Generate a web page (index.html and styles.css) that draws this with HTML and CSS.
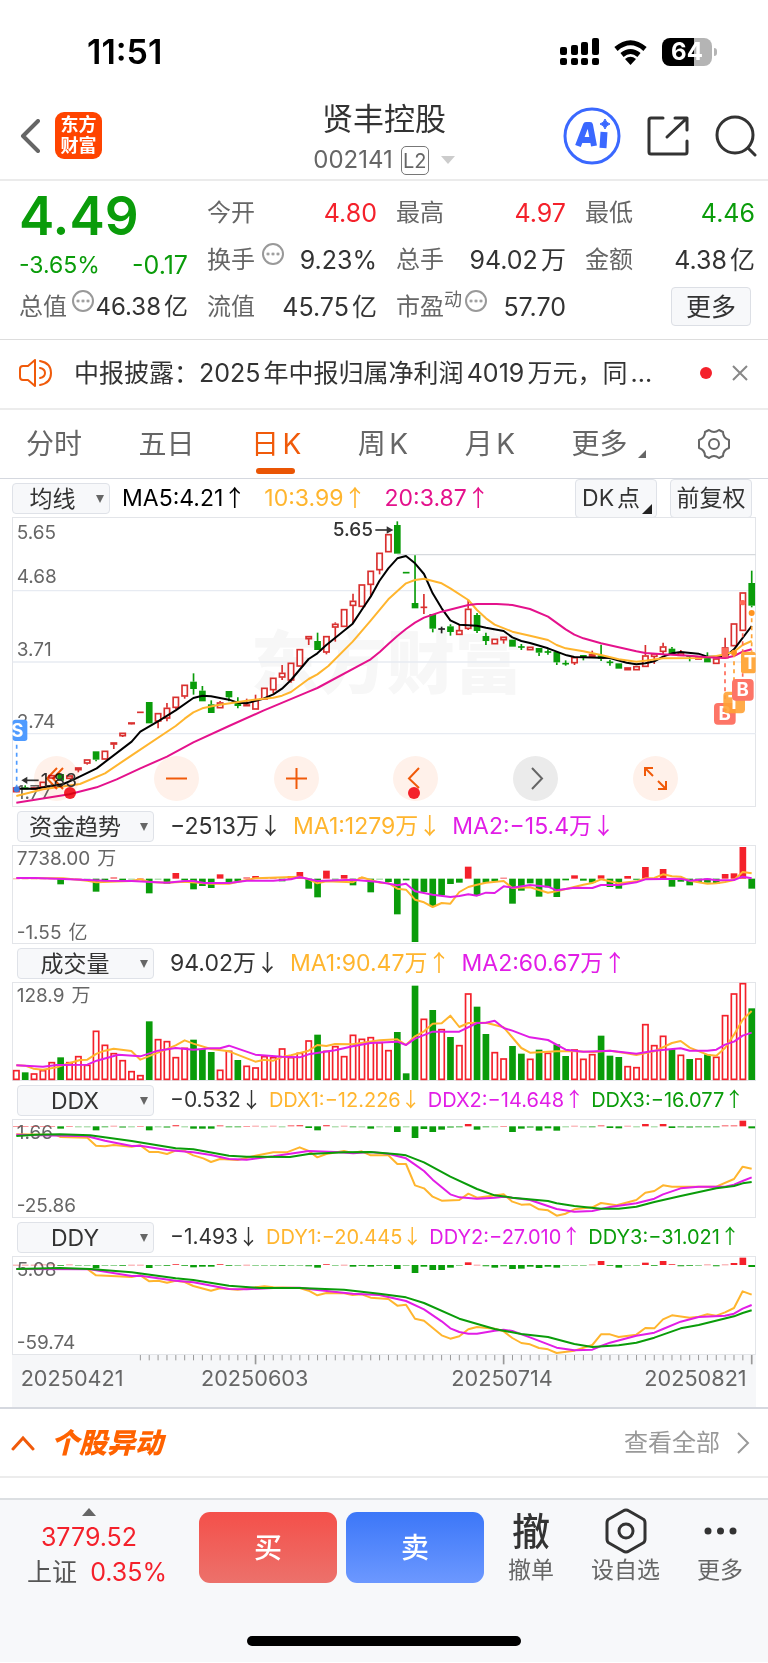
FILE: index.html
```html
<!DOCTYPE html>
<html lang="zh-CN">
<head>
<meta charset="utf-8">
<meta name="viewport" content="width=device-width, initial-scale=1">
<title>贤丰控股 002141</title>
<link rel="stylesheet" href="styles.css">
</head>
<body>
<div class="status">
  <span class="clock">11:51</span>
  <span class="status-icons">
    <svg width="39" height="28" viewBox="0 0 39 28"><g fill="#000"><rect x="0" y="9" width="7" height="8" rx="2"/><rect x="11" y="7" width="7" height="10" rx="2"/><rect x="21" y="4" width="7" height="13" rx="2"/><rect x="32" y="0" width="7" height="17" rx="2"/><rect x="0" y="20" width="7" height="7" rx="2"/><rect x="11" y="20" width="7" height="7" rx="2"/><rect x="21" y="20" width="7" height="7" rx="2"/><rect x="32" y="20" width="7" height="7" rx="2"/></g></svg>
    <svg width="33" height="25" viewBox="0 0 33 25"><g fill="none" stroke="#000" stroke-width="5"><path d="M2 9Q16.500-3.500 31 9"/><path d="M8 15Q16.500 8 25 15"/></g><path d="M11 19Q16.500 14.500 22 19L16.500 25Z"/></svg>
    <span class="battery"><span>64</span></span>
  </span>
</div>
<header class="header">
  <div class="header-left">
    <a href="#" aria-label="返回"><svg width="20" height="34" viewBox="0 0 20 34"><path d="M18 2L3 17L18 32" fill="none" stroke="#666" stroke-width="4" stroke-linecap="round" stroke-linejoin="round"/></svg></a>
    <a href="#" class="logo">东方<br>财富</a>
  </div>
  <div class="header-title">
    <h1>贤丰控股</h1>
    <div class="code">002141 <span class="level">L2</span><svg width="14" height="8" viewBox="0 0 14 8"><path d="M0 0H14L7 8Z" fill="#ccc"/></svg></div>
  </div>
  <div class="header-right">
    <button type="button" aria-label="AI"><svg width="58" height="58" viewBox="0 0 58 58"><circle cx="29" cy="29" r="27" fill="#fff" stroke="#3a68ff" stroke-width="3"/><g fill="none" stroke="#3a68ff" stroke-linejoin="round"><path d="M15 39L23 18H27L31 39M19 33H30" stroke-width="6"/><path d="M41 25L40 41" stroke-width="7"/></g><path d="M42 12Q43 16 47 17Q43 18 42 22Q41 18 37 17Q41 16 42 12Z" fill="#3a68ff" stroke="#3a68ff"/></svg></button>
    <button type="button" aria-label="分享"><svg width="42" height="42" viewBox="0 0 42 42" fill="none" stroke="#333" stroke-width="3" stroke-linecap="round" stroke-linejoin="round"><path d="M16 3H4Q2 3 2 5V37Q2 39 4 39H38Q40 39 40 37V26M28 3H40V15M39 4L20 22"/></svg></button>
    <button type="button" aria-label="搜索"><svg width="42" height="42" viewBox="0 0 42 42" fill="none" stroke="#333" stroke-width="3" stroke-linecap="round"><circle cx="20" cy="20" r="18"/><path d="M33 33L40 40"/></svg></button>
  </div>
</header>

<section class="quote">
  <div class="price-col">
    <div class="price">4.49</div>
    <div class="cell down change"><span>-3.65%</span><span class="diff">-0.17</span></div>
    <div class="cell total"><span class="label">总值<i class="more-dot"></i></span><span>46.38亿</span></div>
  </div>
  <div class="stats">
    <div class="cell"><span class="label">今开</span><span class="up">4.80</span></div>
    <div class="cell"><span class="label">最高</span><span class="up">4.97</span></div>
    <div class="cell"><span class="label">最低</span><span class="down">4.46</span></div>
    <div class="cell"><span class="label">换手<i class="more-dot"></i></span><span>9.23%</span></div>
    <div class="cell"><span class="label">总手</span><span>94.02万</span></div>
    <div class="cell"><span class="label">金额</span><span>4.38亿</span></div>
    <div class="cell"><span class="label">流值</span><span>45.75亿</span></div>
    <div class="cell"><span class="label">市盈<sup>动</sup><i class="more-dot tight"></i></span><span>57.70</span></div>
    <div class="cell end"><button type="button" class="more-btn">更多</button></div>
  </div>
</section>

<div class="notice">
  <svg width="34" height="28" viewBox="0 0 34 28" fill="none" stroke="#f05a0a" stroke-width="2" stroke-linejoin="round" stroke-linecap="round"><path d="M16 1V27L9 21H4Q1 21 1 18V10Q1 7 4 7H9Z"/><path d="M21 2Q32 4 32 14T21 26M21 9Q26 10 26 14T21 19"/></svg>
  <a href="#">中报披露：2025年中报归属净利润4019万元，同...</a>
  <span class="dot"></span>
  <button type="button" aria-label="关闭"><svg width="16" height="16" viewBox="0 0 16 16"><path d="M1 1L15 15M15 1L1 15" stroke="#888" stroke-width="2"/></svg></button>
</div>

<nav class="tabs">
  <a href="#">分时</a><a href="#">五日</a><a href="#" class="active">日K</a><a href="#">周K</a><a href="#">月K</a><a href="#" class="corner">更多</a>
  <button type="button" aria-label="设置"><svg width="32" height="32" viewBox="0 0 32 32" fill="none" stroke="#666" stroke-width="2" stroke-linejoin="round"><path d="M11 2Q16 6 21 2L25 4Q25 10 31 12V20Q25 22 25 28L21 30Q16 26 11 30L7 28Q7 22 1 20V12Q7 10 7 4Z"/><circle cx="16" cy="16" r="5"/></svg></button>
</nav>

<main>
  <div class="ind ind-main">
    <span class="pick"><select aria-label="主图指标"><option>均线</option></select></span>
    <div class="vals"><span class="black">MA5:4.21<b>↑</b></span><span class="amber">10:3.99<b>↑</b></span><span class="pink">20:3.87<b>↑</b></span></div>
    <button type="button" class="tool corner-dark">DK点</button><button type="button" class="tool">前复权</button>
  </div>
  <div class="chart">
    <svg id="kline" viewBox="36 21 2232 870"></svg>
    <div class="chart-nav">
      <button type="button" aria-label="最早" class="mark"><svg viewBox="0 0 45 45"><path d="M23 12L13 22.500L23 33M29 12L19 22.500L29 33"/></svg></button>
      <button type="button" aria-label="缩小"><svg viewBox="0 0 45 45"><path d="M12 22.500H33"/></svg></button>
      <button type="button" aria-label="放大"><svg viewBox="0 0 45 45"><path d="M12 22.500H33M22.500 12V33"/></svg></button>
      <button type="button" aria-label="上一段" class="mark left"><svg viewBox="0 0 45 45"><path d="M26 12L16 22.500L26 32"/></svg></button>
      <button type="button" aria-label="下一段" class="grey"><svg viewBox="0 0 45 45"><path d="M19 12L29 22.500L19 33"/></svg></button>
      <button type="button" aria-label="全屏"><svg viewBox="0 0 45 45"><path d="M20 12H12V20M12 12L20 20M33 25V33H25M33 33L25 25"/></svg></button>
    </div>
  </div>

  <div class="ind">
    <span class="pick wide"><select aria-label="副图一"><option>资金趋势</option></select></span>
    <div class="vals"><span>−2513万<b>↓</b></span><span class="amber">MA1:1279万<b>↓</b></span><span class="magenta">MA2:−15.4万<b>↓</b></span></div>
  </div>
  <div class="chart"><svg id="fund" viewBox="36 121 2232 297"></svg></div>

  <div class="ind">
    <span class="pick wide"><select aria-label="副图二"><option>成交量</option></select></span>
    <div class="vals"><span>94.02万<b>↓</b></span><span class="amber">MA1:90.47万<b>↑</b></span><span class="magenta">MA2:60.67万<b>↑</b></span></div>
  </div>
  <div class="chart"><svg id="volume" viewBox="36 532 2232 297"></svg></div>

  <div class="ind small">
    <span class="pick wide"><select aria-label="副图三"><option>DDX</option></select></span>
    <div class="vals"><span>−0.532<b>↓</b></span><span class="amber">DDX1:−12.226<b>↓</b></span><span class="magenta">DDX2:−14.648<b>↑</b></span><span class="green">DDX3:−16.077<b>↑</b></span></div>
  </div>
  <div class="chart"><svg id="ddx" viewBox="36 117 2232 297"></svg></div>

  <div class="ind small">
    <span class="pick wide"><select aria-label="副图四"><option>DDY</option></select></span>
    <div class="vals"><span>−1.493<b>↓</b></span><span class="amber">DDY1:−20.445<b>↓</b></span><span class="magenta">DDY2:−27.010<b>↑</b></span><span class="green">DDY3:−31.021<b>↑</b></span></div>
  </div>
  <div class="chart"><svg id="ddy" viewBox="36 528 2232 297"></svg></div>
  <div class="axis"><svg id="axis" viewBox="36 822 2232 156"></svg></div>
</main>

<section class="events">
  <svg width="24" height="16" viewBox="0 0 24 16"><path d="M2 14L12 3L22 14" fill="none" stroke="#f05a0a" stroke-width="3" stroke-linecap="round"/></svg>
  <h2>个股异动</h2>
  <a href="#">查看全部<svg width="13" height="22" viewBox="0 0 13 22"><path d="M1 1L11 11L1 21" fill="none" stroke="#999" stroke-width="2"/></svg></a>
</section>
<div class="gap"></div>

<footer class="bottom">
  <div class="bottom-row">
    <a href="#" class="index"><svg width="14" height="8" viewBox="0 0 14 8"><path d="M0 8H14L7 0Z" fill="#666"/></svg><span class="up">3779.52</span><span class="market">上证<em class="up">0.35%</em></span></a>
    <button type="button" class="trade buy">买</button>
    <button type="button" class="trade sell">卖</button>
    <button type="button" class="act"><span class="glyph">撤</span>撤单</button>
    <button type="button" class="act act-mid"><span class="glyph"><svg width="42" height="46" viewBox="0 0 42 46" fill="none" stroke="#333" stroke-width="3" stroke-linejoin="round"><path d="M18 3Q21 1 24 3L38 11Q40 12 40 15V31Q40 34 38 35L24 43Q21 45 18 43L4 35Q2 34 2 31V15Q2 12 4 11Z"/><circle cx="21" cy="23" r="7"/></svg></span>设自选</button>
    <button type="button" class="act"><span class="glyph"><svg width="33" height="8" viewBox="0 0 33 8" fill="#333"><circle cx="4" cy="4" r="3.500"/><circle cx="16.500" cy="4" r="3.500"/><circle cx="29" cy="4" r="3.500"/></svg></span>更多</button>
  </div>
  <div class="home"></div>
</footer>
<script src="charts.js"></script>
</body>
</html>
```
FILE: styles.css
```css
* { box-sizing: border-box; }
body {
  margin: 0;
  background: #fff;
  color: #333;
  font: 24px/32px Inter, "Noto Sans CJK SC", sans-serif;
  text-autospace: normal;
}
a { color: inherit; text-decoration: none; }
button, select { font: inherit; color: inherit; border: 0; padding: 0; background: none; }
svg { display: block; }
i, em { font-style: normal; }

.up { color: #f4212b; }
.down, .green { color: #0a9c0a; }
.black { color: #000; }
.amber { color: #ffb52e; }
.pink { color: #e4128c; }
.magenta { color: #e11de6; }

.status { display: flex; justify-content: space-between; align-items: center; height: 92px; padding: 12px 56px 0 87px; }
.clock { color: #000; font-size: 34px; font-weight: 600; }
.status-icons { display: flex; align-items: center; gap: 15px; }
.battery { position: relative; width: 50px; height: 28px; border-radius: 8px; background: linear-gradient(90deg, #000 64%, #b4b4b4 64%); color: #fff; font-size: 24px; font-weight: 700; line-height: 28px; text-align: center; }
.battery::after { content: ""; position: absolute; right: -5px; top: 10px; width: 3px; height: 8px; border-radius: 0 3px 3px 0; background: #b4b4b4; }

.header { display: grid; grid-template-columns: 1fr auto 1fr; align-items: center; height: 89px; padding: 0 11px; border-bottom: 2px solid #ebebeb; }
.header-left { display: flex; align-items: center; gap: 15px; padding-left: 9px; }
.header-right { display: flex; align-items: center; justify-content: flex-end; gap: 26px; }
.logo { width: 47px; height: 47px; border-radius: 9px; background: #ff4400; color: #fff; font-size: 18px; font-weight: 700; line-height: 21px; text-align: center; padding-top: 2px; }
.header-title { padding-top: 5px; text-align: center; }
h1 { margin: 0; font-size: 31px; font-weight: 400; line-height: 44px; }
.code { display: flex; align-items: center; justify-content: center; gap: 8px; color: #666; font-size: 24px; line-height: 38px; }
.level { width: 28px; height: 29px; border: 1px solid #777; border-radius: 5px; font-size: 20px; line-height: 28px; text-align: center; }
.code svg { margin-left: 4px; }

.quote { display: grid; grid-template-columns: 169px 1fr; column-gap: 19px; height: 159px; padding: 8px 13px 0 19px; border-bottom: 1px solid #ddd; }
.stats { display: grid; grid-template-columns: repeat(3, 1fr); grid-auto-rows: 47px; column-gap: 19px; }
.price { height: 58px; color: #0a9c0a; font-size: 53px; font-weight: 600; line-height: 54px; }
.cell { display: flex; justify-content: space-between; align-items: center; height: 47px; font-size: 25px; white-space: nowrap; }
.change { height: 36px; font-size: 23px; }
.change .diff { font-size: 25px; }
.total { font-size: 24px; }
.label { display: flex; align-items: center; color: #666; font-size: 24px; }
.label sup { font-size: 18px; line-height: 18px; margin-bottom: 14px; vertical-align: baseline; }
.more-dot { width: 22px; height: 22px; margin: 0 0 12px 7px; border: 2px solid #999; border-radius: 50%; background: radial-gradient(circle, #999 1px, transparent 2px) center / 5px 18px repeat-x; background-clip: content-box; padding: 0 2px; }
.total .more-dot { margin-left: 5px; }
.more-dot.tight { margin-left: 3px; }
.end { justify-content: flex-end; }
.more-btn { width: 80px; height: 39px; margin-right: 4px; border: 1px solid #dcdfe5; border-radius: 4px; background: #f7f8fa; line-height: 36px; }

.notice { display: flex; align-items: center; height: 70px; padding: 0 20px 2px 19px; border-bottom: 2px solid #ececec; font-size: 25px; white-space: nowrap; }
.notice a { flex: 1; min-width: 0; margin-left: 21px; overflow: hidden; text-overflow: ellipsis; }
.dot { width: 12px; height: 12px; margin: 0 20px; border-radius: 50%; background: #f4212b; }

.tabs { display: flex; align-items: center; justify-content: space-between; height: 69px; padding: 0 38px 0 26px; border-bottom: 1px solid #d5d8df; color: #666; font-size: 28px; }
.tabs a { position: relative; line-height: 60px; }
.tabs .active { color: #f05a0a; }
.active::after { content: ""; position: absolute; left: 50%; bottom: 0; width: 39px; height: 6px; margin-left: -20px; border-radius: 3px; background: #ea5504; }
.tabs .corner { margin-right: 14px; }
.corner::after { content: ""; position: absolute; right: -19px; bottom: 16px; border: 4px solid; border-color: transparent #666 #666 transparent; }

main { padding: 0 12px; }
.ind { display: flex; align-items: center; height: 38px; padding-left: 5px; white-space: nowrap; font-size: 23px; }
.ind-main { padding-left: 0; }
.pick { position: relative; flex: none; width: 98px; height: 31px; }
.pick.wide { width: 137px; }
.pick select { width: 100%; height: 100%; padding-right: 17px; border: 1px solid #dfe2e8; border-radius: 4px; background: #f7f8fa; appearance: none; text-align: center; text-align-last: center; line-height: 28px; }
.pick.wide select { padding-right: 21px; }
.pick::after { content: ""; position: absolute; right: 6px; top: 12px; border: 4px solid transparent; border-top: 8px solid #666; border-bottom: 0; }
.vals { display: flex; flex: 1; gap: 11px; margin-left: 16px; text-autospace: no-autospace; }
.ind-main .vals { margin-left: 12px; gap: 18px; }
.vals b { font-family: "Noto Sans CJK SC", sans-serif; font-weight: 400; line-height: 28px; }
.small .vals { gap: 7px; font-size: 20px; }
.small .vals span:first-child { font-size: 21px; }
.tool { position: relative; width: 82px; height: 39px; margin-left: 13px; border: 1px solid #dfe2e8; border-radius: 4px; background: #f7f8fa; line-height: 36px; }
.tool:last-child { margin-right: 4px; }
.corner-dark { padding-right: 10px; }
.corner-dark::after { content: ""; position: absolute; right: 4px; bottom: 3px; border: 5px solid; border-color: transparent #222 #222 transparent; }

.chart { position: relative; box-shadow: inset 0 0 0 1px #e3e5e9; }
.chart > svg, .axis > svg { width: 100%; height: auto; }
.axis { background: #f6f7f9; }
.chart-nav { position: absolute; left: 3%; right: 10.500%; bottom: 6px; display: flex; justify-content: space-between; mix-blend-mode: multiply; }
.chart-nav button { position: relative; width: 45px; height: 45px; border-radius: 50%; background: #fff1ea; }
.chart-nav path { fill: none; stroke: #f05a0a; stroke-width: 2; }
.chart-nav .grey { background: #ebebeb; }
.chart-nav .grey path { stroke: #666; }
.mark::after { content: ""; position: absolute; left: 30px; bottom: 2px; width: 12px; height: 12px; border-radius: 50%; background: #f4212b; }
.mark.left::after { left: 15px; }

.events { display: flex; align-items: center; height: 71px; padding: 0 18px 0 11px; border-top: 2px solid #d5d8df; border-bottom: 2px solid #ececec; }
.events h2 { flex: 1; margin: 0 0 0 16px; color: #ff6200; font-size: 28px; font-style: italic; font-weight: 900; }
.events a { display: flex; align-items: center; gap: 17px; color: #999; }
.gap { height: 20px; }

.bottom { height: 164px; border-top: 2px solid #dcdfe2; background: #f7f8fa; }
.bottom-row { display: flex; height: 136px; padding: 8px 13px 0 10px; }
.index { display: flex; flex-direction: column; align-items: center; width: 158px; font-size: 25px; line-height: 35px; white-space: nowrap; }
.index svg { margin-bottom: 4px; }
.market { margin-left: 16px; color: #555; }
.market em { margin-left: 10px; }
.trade { flex: 1; height: 71px; margin-top: 4px; border-radius: 11px; color: #fff; font-size: 28px; font-weight: 500; }
.buy { margin-left: 31px; background: linear-gradient(#f4504a, #ec716b); }
.sell { margin-left: 9px; margin-right: 12px; background: linear-gradient(#3c77f8, #6c98ff); }
.act { display: flex; flex-direction: column; align-items: center; width: 70px; height: 82px; color: #666; font-size: 23px; }
.act-mid { width: 119px; }
.act .glyph { display: grid; place-items: center; height: 46px; color: #333; font-size: 38px; font-weight: 500; line-height: 44px; }
.home { width: 274px; height: 10px; margin: 0 auto; border-radius: 5px; background: #000; }
```
FILE: charts.js
```javascript
const RED = '#d9302f', BRIGHT = '#f4212b', GREEN = '#0a9c0a';
const AMBER = '#ffb52e', MAGENTA = '#e11de6', PINK = '#e4128c';
const x = i => 49 + 26.58 * i;

const rect = (px, py, w, h, fill, extra = '') => `<rect x="${px}" y="${py}" width="${w}" height="${h}" fill="${fill}" ${extra}/>`;
const seg = (x1, y1, x2, y2, c, w, extra = '') => `<path d="M${x1} ${y1}L${x2} ${y2}" stroke="${c}" stroke-width="${w}" ${extra}/>`;
const poly = (pts, c, w = 6) => `<polyline points="${pts}" fill="none" stroke="${c}" stroke-width="${w}" stroke-linejoin="round"/>`;
const label = (px, py, s, extra = 'font-size="57" fill="#666"') => `<text x="${px}" y="${py}" ${extra}>${s}</text>`;
const put = (id, s) => { document.getElementById(id).innerHTML = s; };

// Daily candles: kind, high, body top, body bottom, low.
const candles = `r 832 832 846 846|g 826 832 838 838|r 830 832 838 838|r 815 815 832 832|r 795 795 805 805|g 792 792 812 812|r 796 796 806 806|r 772 772 780 787|r 748 748 760 764|g 724 724 749 754
r 722 722 748 748|r 697 697 703 717|r 668 668 678 681|r 637 637 640 643|r 607 607 607 607|g 576 576 640 640|r 609 609 634 655|r 579 593 625 634|r 560 560 593 597|r 524 524 559 566
g 490 515 537 554|g 528 542 574 574|g 571 583 609 609|r 573 577 594 594|g 543 543 562 574|g 562 575 588 595|r 566 583 588 588|r 554 570 598 598|r 533 533 568 568|r 503 503 540 550
r 465 488 502 510|r 458 458 511 518|r 417 417 469 469|r 378 378 387 405|g 368 393 420 420|r 378 378 427 433|r 337 341 352 395|r 297 297 350 350|r 251 272 287 340|r 223 223 290 290
r 182 182 224 260|r 128 128 180 193|r 72 72 126 126|g 34 45 131 131|g 188 188 188 188|g 136 279 295 295|r 252 292 292 312|g 312 312 356 367|k 350 357 357 370|g 343 349 366 377
r 342 360 374 374|r 270 296 356 360|g 309 315 363 369|g 368 378 393 405|r 386 386 402 402|r 380 380 390 401|g 389 389 410 410|g 402 411 411 420|r 410 410 420 420|g 414 414 428 438
g 418 426 426 434|g 426 426 457 465|g 451 461 461 467|r 441 441 459 465|g 435 435 443 451|r 422 432 440 440|g 404 436 446 453|g 449 457 457 467|g 460 460 476 476|r 472 472 480 480
r 468 468 480 480|r 405 436 470 470|r 430 430 440 462|r 398 409 425 433|g 411 416 432 432|r 420 427 437 437|g 437 437 441 454|r 440 440 448 448|g 427 440 457 457|r 445 445 461 461
r 383 412 444 444|r 340 340 408 408|r 247 247 362 362|g 182 219 287 292`.split(/[|\n]/).map(s => s.split(' ')).map(([k, ...v]) => [k, ...v.map(Number)]);

function candle([kind, high, top, bottom, low], i) {
  const c = { r: RED, g: GREEN, k: '#222' }[kind], cx = x(i);
  if (bottom - top < 2) return seg(cx - 10, top, cx + 10, top, c, 5) + seg(cx, high, cx, low, c, 5);
  const wick = seg(cx, high, cx, top, c, 5) + seg(cx, bottom, cx, low, c, 5);
  return wick + (kind === 'g' ? rect(cx - 10, top, 20, bottom - top, c)
    : rect(cx - 8, top + 2, 16, Math.max(bottom - top - 3, 2), '#fff', `stroke="${c}" stroke-width="5"`));
}

const badge = (bx, by, t, c) => rect(bx, by, 65, 65, c, 'rx="12"') + label(bx + 32, by + 52, t, 'font-size="56" font-weight="700" fill="#fff" text-anchor="middle"');
const dash = (cx, y1, y2, c) => seg(cx, y1, cx, y2, c, 5, 'stroke-dasharray="12 12"');

put('kline',
  label(752, 533, '东方财富', 'font-size="204" font-weight="900" fill="#f7f7f7"')
  + [242, 456, 671].map(y => seg(38, y, 2267, y, '#e7ebf2', 4)).join('')
  + seg(1192, 134, 2267, 134, '#d6d9dd', 4)
  + label(50, 86, '5.65') + label(50, 220, '4.68') + label(50, 437, '3.71') + label(50, 653, '2.74') + label(50, 868, '1.77')
  + candles.map(candle).join('')
  + poly('49,836 106,836 190,822 222,808 290,775 395,695 421,665 474,634 527,601 580,564 607,557 633,559 687,569 713,578 740,580 790,566 820,553 846,536 873,510 926,447 952,430 979,405 1058,341 1085,300 1112,260 1138,213 1165,175 1192,145 1218,138 1245,160 1272,192 1298,250 1325,295 1351,331 1378,344 1431,347 1458,353 1511,363 1537,382 1564,393 1590,399 1644,415 1700,436 1723,441 1800,443 1830,444 1880,458 1909,463 1936,460 1963,454 1989,440 2016,430 2042,426 2095,431 2122,440 2175,440 2202,418 2255,348', '#000')
  + poly('49,858 129,838 240,822 315,790 395,736 527,648 554,626 580,607 607,595 650,586 740,572 820,563 846,557 873,546 926,507 952,493 985,468 1058,395 1112,332 1165,268 1218,220 1245,210 1272,206 1325,220 1351,235 1405,270 1431,300 1458,325 1484,344 1537,365 1590,377 1644,390 1670,405 1697,415 1750,424 1803,435 1856,448 1909,455 1936,452 1989,445 2100,444 2149,438 2175,433 2202,425 2228,405 2255,393', AMBER)
  + poly('49,878 208,853 290,832 350,808 421,775 501,740 580,697 687,648 790,602 926,545 952,534 1112,448 1140,425 1165,402 1192,378 1218,357 1245,338 1272,323 1325,305 1405,285 1431,282 1490,282 1537,285 1590,297 1644,320 1697,358 1723,374 1750,385 1803,400 1856,412 1909,424 1936,429 1989,433 2069,437 2122,442 2175,444 2202,438 2228,425 2255,418', PINK)
  + label(998, 79, '5.65', 'font-size="57" font-weight="500" fill="#333"')
  + seg(1126, 60, 1165, 60, '#333', 5) + '<path d="M1160 49L1180 60L1160 71Z" fill="#333"/>'
  + label(122, 831, '1.83', 'font-size="57" fill="#333"')
  + seg(75, 811, 116, 811, '#333', 5) + '<path d="M82 800L64 811L82 822Z" fill="#333"/>'
  + dash(50, 704, 830, '#4f9bff') + '<circle cx="50" cy="838" r="9" fill="#3f7ae0"/>'
  + rect(38, 629, 44, 64, '#4f9bff', 'rx="8"') + label(52, 681, 'S', 'font-size="56" font-weight="700" fill="#fff" text-anchor="middle"')
  + dash(2175, 460, 570, '#ff6a58') + dash(2202, 430, 540, '#ffa235') + dash(2228, 370, 500, '#ff6a58') + dash(2255, 325, 425, '#ffa235')
  + rect(2220, 270, 16, 16, '#ff6a58', 'rx="6"') + '<circle cx="2255" cy="309" r="9" fill="#ff9420"/><circle cx="2202" cy="428" r="9" fill="#ff9420"/>'
  + rect(2166, 414, 18, 28, '#ff6a58')
  + badge(2142, 579, 'B', '#fd7567') + badge(2170, 545, 'T', 'rgba(255,162,53,.9)') + badge(2196, 507, 'B', '#fd7567')
  + rect(2223, 425, 44, 65, '#ffa93f', 'rx="8"') + label(2250, 478, 'T', 'font-size="56" font-weight="700" fill="#fff" text-anchor="middle"'));

// Signed bars around a baseline; short ones are drawn pale.
function bars(values, base) {
  return values.map((v, i) => {
    const a = Math.abs(v), op = a < 3 ? .45 : a < 5 ? .75 : 1;
    return rect(x(i) - 10, v > 0 ? base - v : base, 20, Math.max(a, 3), v > 0 ? BRIGHT : GREEN, `opacity="${op}"`);
  }).join('');
}

put('fund',
  label(50, 182, '7738.00万') + label(50, 402, '-1.55亿')
  + bars([1, 1, 1, 1, 1, -17, 1, 1, -1, -39, -7, 4, -7, -1, 2, -44, -1, -16, 17, -5, -32, -22, -28, 13, -15, -9, 4, 8, 2, 3, -8, 8, 20, -30, -56, 24, -3, 11, -20, 4, -41, -2, -10, -107, -5, -190, -40, -82, -50, -16, -12, 36, -50, -12, -8, 3, -75, -36, -14, -54, -26, -55, -5, 10, -6, -12, 10, -25, -30, 8, -4, 35, 1, 29, -24, -9, -20, -10, -12, -15, 14, 16, 95, -30], 222)
  + poly('49,220 190,221 262,228 288,233 395,229 421,224 448,232 501,234 554,231 633,237 687,237 766,221 899,216 926,224 952,236 979,230 1058,233 1085,218 1112,226 1140,234 1165,235 1192,252 1218,255 1245,285 1272,293 1298,307 1325,295 1351,297 1378,262 1405,247 1431,240 1458,234 1511,229 1537,250 1590,248 1644,264 1670,260 1750,240 1777,235 1803,224 1856,236 1909,230 1936,221 1963,220 1989,209 2016,215 2042,216 2069,228 2122,237 2149,236 2175,232 2202,226 2228,202 2255,206', AMBER)
  + poly('49,220 106,220 190,223 315,228 395,229 501,234 554,229 580,229 613,235 687,235 740,228 820,228 873,224 899,217 952,229 1058,225 1138,232 1192,242 1218,237 1245,260 1298,270 1351,277 1378,274 1405,269 1431,273 1458,264 1484,265 1511,245 1537,249 1590,241 1644,246 1670,257 1723,249 1777,250 1803,241 1856,241 1909,233 1936,224 2042,222 2069,228 2122,223 2149,227 2202,226 2228,216 2255,221', MAGENTA));

const volumes = 'r796 g803 r806 r796 r772 g758 r772 r754 r780 r678 r720 r745 r766 r799 r811 g650 r703 r709 r757 r729 g705 g733 g742 r795 r738 g766 r783 r788 r754 r757 r731 r757 r744 r707 g690 r738 r724 r754 r690 r702 r697 r712 r736 g682 g806 g543 r642 g616 r673 g697 r721 r566 g606 g688 r742 r761 g724 g747 r762 g735 r744 g719 g754 r734 r762 r748 g693 g753 g757 r784 r787 r658 r721 r693 g734 r750 g763 r761 g749 r756 r631 r566 r535 g611'.split(' ');
put('volume',
  label(50, 592, '128.9万')
  + volumes.map((s, i) => {
    const top = +s.slice(1);
    return s[0] === 'g' ? rect(x(i) - 10, top, 20, 826 - top, GREEN)
      : rect(x(i) - 8, top + 2, 16, 822 - top, '#fff', `stroke="${BRIGHT}" stroke-width="5"`);
  }).join('')
  + poly('49,782 75,783 100,792 129,795 170,788 200,778 240,766 262,765 290,747 315,738 341,732 394,739 421,765 474,744 527,722 554,707 580,717 633,733 687,740 766,771 793,765 820,768 846,757 873,752 926,738 952,721 979,724 1005,718 1058,719 1138,707 1192,704 1218,721 1245,695 1272,680 1298,657 1325,656 1351,633 1378,667 1405,655 1458,654 1511,668 1564,730 1590,744 1670,740 1723,740 1780,742 1830,738 1880,746 1909,751 1963,740 2016,715 2042,709 2069,729 2122,750 2149,753 2175,730 2202,690 2228,645 2255,619', AMBER)
  + poly('49,782 129,786 170,781 262,780 290,768 355,750 421,755 474,738 527,730 580,735 633,731 660,731 687,723 766,750 846,756 899,758 926,749 1005,737 1058,725 1112,715 1192,711 1218,721 1245,702 1298,681 1378,681 1431,655 1458,654 1484,648 1511,670 1537,678 1590,698 1644,706 1697,735 1750,741 1830,738 1909,747 1963,738 2042,731 2069,738 2122,738 2149,735 2175,720 2202,711 2228,693 2255,684', MAGENTA));

put('ddx',
  label(50, 176, '1.66') + label(50, 396, '-25.86')
  + bars([1, 1, 1, 1, 1, -7, 1, -2, -2, -12, -3, 2, -4, -1, 1, -12, -1, -4, 4, -2, -7, -7, -7, 3, -3, -3, 1, 2, -1, 2, -1, 3, 4, -5, -12, 4, -1, 2, -3, -1, -7, -1, -2, -17, -1, -35, -8, -17, -10, -4, -3, 7, -10, -3, -2, 1, -17, -7, -4, -13, -6, -13, -2, 2, -2, -3, 3, -5, -6, 2, -1, 7, -1, 7, -5, -3, -4, -3, -3, -3, 3, 3, 17, -6], 139)
  + poly('49,163 170,165 182,171 262,173 288,197 315,199 341,195 395,200 421,196 448,216 475,216 501,222 527,212 554,213 580,226 610,235 633,246 660,237 713,240 766,227 820,217 860,217 899,202 926,213 952,232 979,222 1032,213 1058,219 1085,214 1112,226 1165,226 1192,252 1218,252 1245,316 1272,325 1298,350 1325,362 1378,360 1405,341 1431,353 1511,343 1537,365 1564,374 1590,373 1617,388 1644,391 1670,407 1697,401 1723,388 1777,382 1803,369 1850,376 1909,360 1936,338 1963,333 1989,316 2016,320 2149,320 2202,297 2228,260 2255,266', AMBER)
  + poly('49,164 262,169 315,182 395,198 421,197 501,210 580,217 633,225 687,237 740,239 820,229 926,213 1005,216 1060,220 1110,216 1165,221 1218,235 1245,254 1272,273 1298,299 1351,343 1378,352 1431,356 1484,353 1511,350 1590,360 1670,387 1723,395 1777,393 1830,381 1909,370 1963,356 1989,343 2042,325 2096,320 2175,320 2202,314 2228,303 2255,292', MAGENTA)
  + poly('49,168 106,164 180,163 270,166 395,183 527,205 580,208 687,227 740,230 870,231 926,222 1032,217 1112,216 1192,223 1218,226 1272,247 1351,290 1431,327 1484,346 1537,353 1644,363 1670,370 1723,378 1803,386 1856,386 1909,380 1963,366 2042,348 2149,325 2202,318 2228,310 2255,306', GREEN));

put('ddy',
  label(50, 587, '5.08') + label(50, 807, '-59.74')
  + bars([1, 1, 1, 2, 2, -3, 2, -2, -2, -10, -2, -1, -3, 1, 1, -9, -1, -3, 3, -3, -7, -5, -5, 3, -3, -2, 1, -1, -1, -2, -3, -1, -1, -4, -8, 3, -1, 1, -5, -3, -5, -3, -3, -12, -1, -24, -5, -15, -15, -8, -1, 8, 1, -4, -8, -4, -12, -11, -5, -9, -5, -8, -2, -2, -2, 2, 12, -3, -8, -2, -1, 7, -3, 12, 3, -4, -3, -2, 2, -4, 2, 6, 22, -6], 555)
  + poly('49,567 262,567 288,586 395,591 421,586 448,604 475,602 501,608 527,602 554,606 580,618 633,632 660,625 713,629 793,619 820,622 899,624 926,632 952,646 979,639 1032,640 1058,645 1085,643 1112,653 1165,657 1192,677 1218,674 1245,716 1272,722 1325,766 1351,776 1378,769 1405,748 1431,741 1484,746 1511,754 1537,774 1564,789 1590,793 1617,804 1644,808 1670,819 1723,812 1777,795 1803,763 1830,763 1856,771 1909,764 1936,744 1963,745 1989,718 2016,706 2069,713 2096,710 2122,703 2149,707 2175,697 2202,684 2228,634 2255,644', AMBER)
  + poly('49,567 270,568 395,588 421,587 527,602 580,607 687,627 740,628 820,624 899,623 952,630 1058,641 1138,645 1218,663 1272,688 1325,724 1351,745 1378,756 1405,761 1431,761 1484,752 1511,749 1537,753 1590,772 1670,803 1723,811 1777,809 1803,798 1830,788 1909,767 1963,758 1989,747 2042,725 2096,711 2175,707 2202,701 2228,686 2255,675', MAGENTA)
  + poly('49,567 180,564 270,567 395,577 527,595 580,600 687,617 780,624 899,624 1032,629 1138,641 1218,652 1272,669 1378,716 1484,747 1511,752 1564,762 1644,771 1723,792 1777,801 1856,796 1909,788 1963,773 2042,745 2096,735 2202,709 2228,699 2255,691', GREEN));

let ticks = '';
for (let i = 14; i < 84; i++) {
  const major = i === 27 || i === 55 || i === 83;
  ticks += seg(x(i), 822, x(i), major ? 850 : 838, '#999', major ? 5 : 3);
}
const dateStyle = 'font-size="65" fill="#666"';
put('axis', ticks + label(62, 914, '20250421', dateStyle) + label(603, 914, '20250603', dateStyle)
  + label(1354, 914, '20250714', dateStyle) + label(2240, 914, '20250821', dateStyle + ' text-anchor="end"'));
```
